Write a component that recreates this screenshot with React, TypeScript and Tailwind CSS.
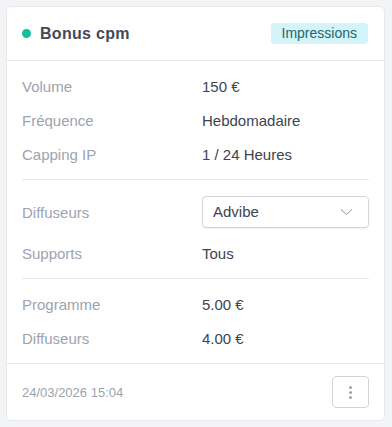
import React from "react";

const Row = ({ label, children }: { label: string; children: React.ReactNode }) => (
  <div className="flex items-center h-[34px] pt-[2px]">
    <div className="w-[180px] text-[#9ca3af]">{label}</div>
    <div className="text-[#3d4451]">{children}</div>
  </div>
);

export default function App() {
  return (
    <div className="min-h-[427px] bg-[#f3f4f6] p-[6px] pr-[7px] font-['Liberation_Sans',Arial,sans-serif]">
      <div className="bg-white rounded-[5px] border border-[#e8e9ed] text-[15px] leading-5 h-[415px] flex flex-col">
        <div className="flex items-center justify-between h-[54px] px-[15px] border-b border-[#e5e7eb]">
          <div className="flex items-center gap-[9px]">
            <span className="w-[9px] h-[9px] rounded-full bg-[#12bf9c]" />
            <span className="font-bold text-[16px] text-[#434a56] tracking-[0.3px]">Bonus cpm</span>
          </div>
          <span className="bg-[#d3f4f8] text-[#24666f] text-[14px] leading-[21px] px-[11px] rounded-[4px] mr-px">Impressions</span>
        </div>
        <div className="px-[15px]">
          <div className="py-2 border-b border-[#e5e7eb]">
            <Row label="Volume">150 €</Row>
            <Row label="Fréquence">Hebdomadaire</Row>
            <Row label="Capping IP">1 / 24 Heures</Row>
          </div>
          <div className="py-2 border-b border-[#e5e7eb]">
            <div className="flex items-center h-[48px]">
              <div className="w-[180px] text-[#9ca3af] mt-[2px]">Diffuseurs</div>
              <div className="w-[167px] h-[32px] border border-[#d1d5db] rounded-[4px] shadow-[0_1px_2px_rgba(0,0,0,0.06)] flex items-center justify-between pl-[10px] pr-[15px] text-[#3d4451]">
                <span>Advibe</span>
                <svg width="13" height="8" viewBox="0 0 13 8" fill="none" stroke="#8b919c" strokeWidth="1">
                  <path d="M1 1.5 L6.5 6.5 L12 1.5" />
                </svg>
              </div>
            </div>
            <Row label="Supports">Tous</Row>
          </div>
          <div className="py-2">
            <Row label="Programme">5.00 €</Row>
            <Row label="Diffuseurs">4.00 €</Row>
          </div>
        </div>
        <div className="flex-1 border-t border-[#e5e7eb] flex items-center justify-between px-[15px]">
          <span className="text-[13px] text-[#9ca3af] mt-px">24/03/2026 15:04</span>
          <button className="w-[37px] h-[32px] border border-[#d1d5db] rounded-[4px] flex flex-col items-center justify-center gap-[2px]">
            <span className="w-[3px] h-[3px] rounded-full bg-[#9ca3af]" />
            <span className="w-[3px] h-[3px] rounded-full bg-[#9ca3af]" />
            <span className="w-[3px] h-[3px] rounded-full bg-[#9ca3af]" />
          </button>
        </div>
      </div>
    </div>
  );
}
